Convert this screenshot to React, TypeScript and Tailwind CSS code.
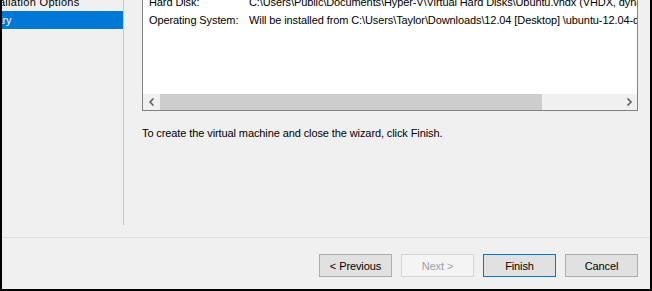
import React from "react";

const font = { fontFamily: '"Liberation Sans", Arial, sans-serif' };

function Btn({ children, primary, disabled }: { children: React.ReactNode; primary?: boolean; disabled?: boolean }) {
  const base = "w-[73px] h-[23px] flex items-center justify-center text-[11px] border shrink-0";
  const cls = disabled
    ? "bg-[#f4f4f4] border-[#d5d5d5] text-[#a0a0a0]"
    : primary
    ? "bg-[#e1e1e1] border-[#0078d7] text-black"
    : "bg-[#e1e1e1] border-[#adadad] text-black";
  return <div className={`${base} ${cls}`}>{children}</div>;
}

export default function App() {
  return (
    <div
      style={font}
      className="w-[652px] h-[291px] bg-[#f0f0f0] border-l-2 border-r-2 border-b-2 border-black flex flex-col overflow-hidden text-[11px] tracking-[-0.1px] leading-[18px] text-black"
    >
      <div className="flex h-[237px]">
        {/* nav */}
        <div className="w-[121px] shrink-0 h-[225px] overflow-hidden flex flex-col">
          <div className="h-[18px] mt-[-7px] flex items-center whitespace-nowrap">
            <span className="ml-[-22px] tracking-[0.3px]">Installation Options</span>
          </div>
          <div className="h-[18px] bg-[#0078d7] text-white flex items-center whitespace-nowrap">
            <span className="ml-[-37px]">Summary</span>
          </div>
        </div>
        <div className="w-px shrink-0 h-[225px] bg-[#c8c8c8]" />
        {/* content */}
        <div className="flex-1 min-w-0 pl-[18px] pr-[12px] flex flex-col">
          <div className="h-[111px] bg-white border-l border-r border-b border-[#828282] flex flex-col overflow-hidden">
            <div className="flex-1 overflow-hidden">
              <div className="mt-[-7px] pl-[6px] flex flex-col whitespace-nowrap">
                <div className="flex h-[18px] items-center">
                  <span className="w-[100px] shrink-0">Hard Disk:</span>
                  <span>C:\Users\Public\Documents\Hyper-V\Virtual Hard Disks\Ubuntu.vhdx (VHDX, dynamically expanding)</span>
                </div>
                <div className="flex h-[18px] items-center">
                  <span className="w-[100px] shrink-0">Operating System:</span>
                  <span>Will be installed from C:\Users\Taylor\Downloads\12.04 [Desktop] \ubuntu-12.04-desktop-amd64.iso</span>
                </div>
              </div>
            </div>
            <div className="h-[16px] shrink-0 bg-[#f0f0f0] flex items-center">
              <div className="w-[17px] h-full flex items-center justify-center">
                <svg width="8" height="8" viewBox="0 0 8 8">
                  <path d="M5.5 0.5 L2 4 L5.5 7.5" stroke="#606060" strokeWidth="1.6" fill="none" />
                </svg>
              </div>
              <div className="w-[382px] h-full bg-[#cdcdcd]" />
              <div className="flex-1" />
              <div className="w-[17px] h-full flex items-center justify-center">
                <svg width="8" height="8" viewBox="0 0 8 8">
                  <path d="M2.5 0.5 L6 4 L2.5 7.5" stroke="#606060" strokeWidth="1.6" fill="none" />
                </svg>
              </div>
            </div>
          </div>
          <div className="mt-[13px] whitespace-nowrap">
            To create the virtual machine and close the wizard, click Finish.
          </div>
        </div>
      </div>
      <div className="h-px bg-[#dfdfdf]" />
      <div className="flex justify-end gap-[9px] pt-[16px] pr-[12px]">
        <Btn>&lt; Previous</Btn>
        <Btn disabled>Next &gt;</Btn>
        <Btn primary>Finish</Btn>
        <Btn>Cancel</Btn>
      </div>
    </div>
  );
}
